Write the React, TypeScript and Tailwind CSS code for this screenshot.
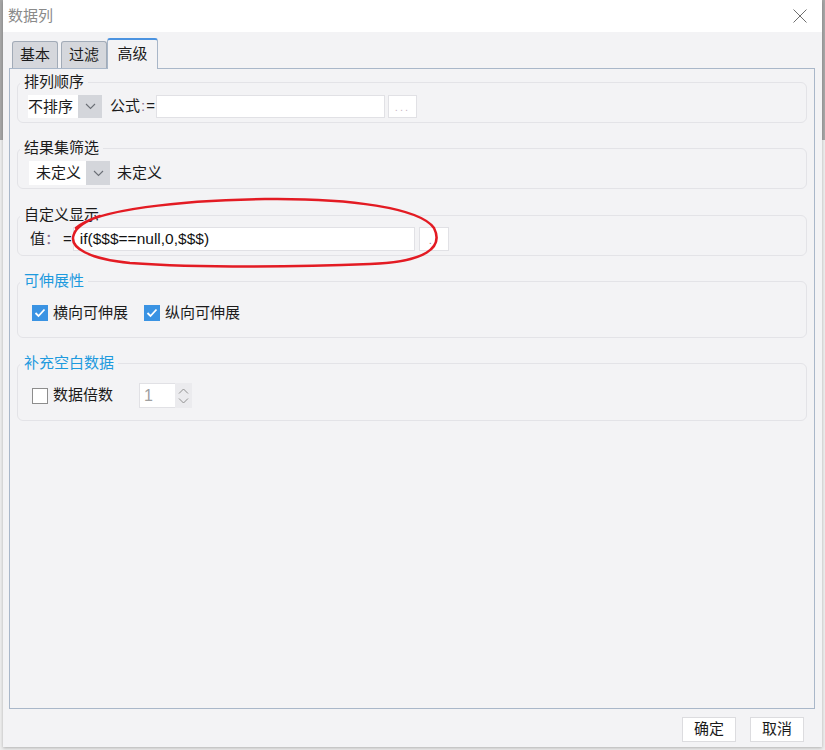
import React from 'react'

const font = "font-['Liberation_Sans','Noto_Sans_CJK_SC',sans-serif]"

const Chevron = () => (
  <svg width="11" height="7" viewBox="0 0 11 7" fill="none">
    <path d="M1 1 L5.5 5.5 L10 1" stroke="#6b6f76" strokeWidth="1.1" />
  </svg>
)

const Check = ({ checked }: { checked: boolean }) =>
  checked ? (
    <span className="w-[16px] h-[16px] bg-[#3a93e3] flex items-center justify-center shrink-0">
      <svg width="12" height="10" viewBox="0 0 12 10" fill="none">
        <path d="M1.5 5 L4.5 8 L10.5 1.5" stroke="#fff" strokeWidth="1.8" />
      </svg>
    </span>
  ) : (
    <span className="w-[16px] h-[16px] bg-white border border-[#8d8d8d] shrink-0" />
  )

const Group: React.FC<{ title: string; blue?: boolean; className?: string; children: React.ReactNode }> = ({
  title,
  blue,
  className,
  children,
}) => (
  <fieldset className={`border border-[#e3e3e7] rounded-[6px] ${className}`}>
    <legend
      className={`ml-[2px] px-[4px] h-[18px] leading-[18px] text-[15px] ${blue ? 'text-[#1d9ade]' : 'text-[#1b1b1b]'}`}
    >
      {title}
    </legend>
    {children}
  </fieldset>
)

export default function App() {
  return (
    <div
      className={`relative w-[825px] h-[750px] overflow-hidden bg-[linear-gradient(to_bottom,#a6a6a6_0px,#a6a6a6_140px,#ededed_140px)] ${font}`}
    >
      {/* dialog */}
      <div className="ml-[3px] w-[819px] h-[747px] flex flex-col bg-[#f3f3f5] shadow-[0_1px_3px_rgba(0,0,0,0.25)]">
        {/* title bar */}
        <div className="h-[32px] bg-white flex items-center justify-between pl-[5px] pr-[15px]">
          <span className="text-[15px] text-[#8a8a8a]">数据列</span>
          <svg width="14" height="14" viewBox="0 0 14 14" fill="none">
            <path d="M0.5 0.5 L13.5 13.5 M13.5 0.5 L0.5 13.5" stroke="#6e6e6e" strokeWidth="1" />
          </svg>
        </div>

        {/* tabs */}
        <div className="mt-[6px] ml-[9px] flex items-end h-[30px] text-[15px] text-[#1b1b1b]">
          <div className="w-[46px] h-[27px] bg-[#d5d7dc] border border-b-0 border-[#a2abb7] rounded-t-[3px] flex items-center justify-center">
            基本
          </div>
          <div className="ml-[3px] w-[46px] h-[27px] bg-[#d5d7dc] border border-b-0 border-[#a2abb7] rounded-t-[3px] flex items-center justify-center">
            过滤
          </div>
          <div className="relative z-10 -mb-px w-[51px] h-[31px] bg-[#f3f3f5] border border-b-0 border-[#a8b6c8] border-t-2 border-t-[#4b93e0] rounded-t-[3px] flex items-center justify-center">
            高级
          </div>
        </div>

        {/* tab panel */}
        <div className="ml-[6px] w-[806px] h-[641px] border border-[#a9b7c9] bg-[#f3f3f5] px-[7px] text-[15px] text-[#1b1b1b]">
          <Group title="排列顺序" className="mt-[4px] pt-[4px] pb-[4px]">
            <div className="flex items-center h-[23px] pl-[10px]">
              <div className="w-[74px] h-[23px] bg-white flex items-center">
                <span className="flex-1 leading-[23px]">不排序</span>
                <span className="w-[24px] h-full bg-[#d4d6db] flex items-center justify-center">
                  <Chevron />
                </span>
              </div>
              <span className="ml-[8px]">公式</span>
              <span className="text-[#8b6f8f] ml-[1px]">:</span>
              <span className="ml-[1px]">=</span>
              <div className="ml-[1px] w-[229px] h-[23px] bg-white border border-[#e1e1e5]" />
              <div className="ml-[3px] w-[29px] h-[23px] bg-white border border-[#e1e1e5] flex items-end justify-center pb-[4px] text-[11px] tracking-[2px] text-[#c9b7c4] leading-none">
                ...
              </div>
            </div>
          </Group>

          <Group title="结果集筛选" className="mt-[16px] pt-[4px] pb-[3px]">
            <div className="flex items-center h-[24px] pl-[11px]">
              <div className="w-[81px] h-[24px] bg-white flex items-center">
                <span className="flex-1 pl-[7px] leading-[24px]">未定义</span>
                <span className="w-[24px] h-full bg-[#d4d6db] flex items-center justify-center">
                  <Chevron />
                </span>
              </div>
              <span className="ml-[7px]">未定义</span>
            </div>
          </Group>

          <Group title="自定义显示" className="mt-[17px] pt-[3px] pb-[4px]">
            <div className="flex items-center h-[24px] pl-[12px]">
              <span>值</span>
              <span className="text-[#8b6f8f]">：</span>
              <span className="ml-[3px]">=</span>
              <div className="ml-[1px] w-[342px] h-[24px] bg-white border border-[#e1e1e5] flex items-center pl-[6px] text-[15.5px] text-[#111]">
                if($$$==null,0,$$$)
              </div>
              <div className="ml-[4px] w-[30px] h-[24px] bg-white border border-[#e1e1e5] flex items-end justify-center pb-[4px] text-[11px] tracking-[2px] text-[#9b7fa0] leading-none">
                ..
              </div>
            </div>
          </Group>

          <Group title="可伸展性" blue className="mt-[16px] pt-[11px] pb-[12px]">
            <div className="flex items-center h-[24px] pl-[14px]">
              <Check checked />
              <span className="ml-[5px]">横向可伸展</span>
              <span className="ml-[16px]">
                <Check checked />
              </span>
              <span className="ml-[5px]">纵向可伸展</span>
            </div>
          </Group>

          <Group title="补充空白数据" blue className="mt-[16px] pt-[11px] pb-[12px]">
            <div className="flex items-center h-[25px] pl-[14px]">
              <Check checked={false} />
              <span className="ml-[5px]">数据倍数</span>
              <div className="ml-[26px] w-[53px] h-[25px] flex">
                <div className="w-[36px] h-full bg-white border border-[#e1e1e5] border-r-0 pl-[4px] leading-[23px] text-[16px] text-[#a0a0a0]">
                  1
                </div>
                <div className="w-[17px] h-full bg-[#ebebee] flex flex-col items-center justify-center gap-[4px]">
                  <svg width="11" height="6" viewBox="0 0 11 6" fill="none">
                    <path d="M1 5.5 L5.5 1 L10 5.5" stroke="#8f8f8f" strokeWidth="1" />
                  </svg>
                  <svg width="11" height="6" viewBox="0 0 11 6" fill="none">
                    <path d="M1 0.5 L5.5 5 L10 0.5" stroke="#8f8f8f" strokeWidth="1" />
                  </svg>
                </div>
              </div>
            </div>
          </Group>
        </div>

        {/* buttons */}
        <div className="mt-[8px] flex justify-end gap-[14px] pr-[18px] text-[15px] text-[#1b1b1b]">
          <button className="w-[54px] h-[25px] bg-white border border-[#dcdcdf]">确定</button>
          <button className="w-[54px] h-[25px] bg-white border border-[#dcdcdf]">取消</button>
        </div>
      </div>

      {/* red hand-drawn annotation */}
      <svg className="absolute inset-0 pointer-events-none" width="825" height="750" viewBox="0 0 825 750" fill="none">
        <path
          d="M76 228 C95 210 180 200 265 199 C350 198 420 208 434 228 C444 248 425 262 370 264 C300 267 200 268 130 263 C90 259 68 248 74 234 C77 226 88 220 100 216"
          stroke="#e31b23"
          strokeWidth="2.5"
          strokeLinecap="round"
        />
      </svg>
    </div>
  )
}
